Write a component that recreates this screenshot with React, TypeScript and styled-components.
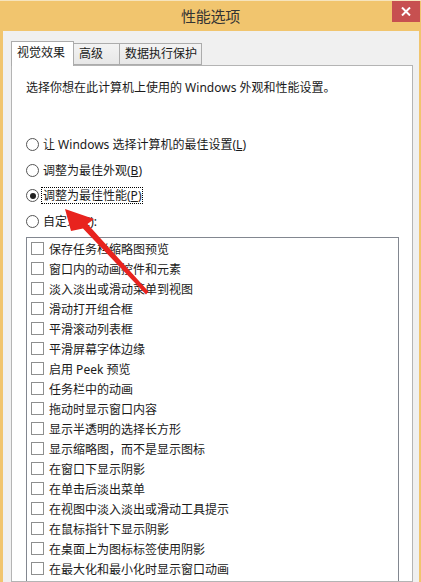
import React from "react";
import styled, { createGlobalStyle } from "styled-components";

const Global = createGlobalStyle`
  html, body { margin: 0; padding: 0; background: #ffffff; }
  #root { width: 421px; height: 582px; overflow: hidden; }
  * { box-sizing: border-box; }
`;

const Window = styled.div`
  position: relative;
  width: 421px;
  height: 582px;
  display: flex;
  flex-direction: column;
  background: #f1c56e;
  border-top: 1px solid #f6e4bd;
  overflow: hidden;
  font-family: "Noto Sans", "Noto Sans CJK SC", sans-serif;
  font-size: 12px;
  color: #1a1a1a;
`;

const TitleBar = styled.div`
  height: 30px;
  flex: none;
  display: grid;
  grid-template-columns: 1fr auto 1fr;
  align-items: start;
`;

const Title = styled.div`
  grid-column: 2;
  font-size: 15px;
  line-height: 30px;
  color: #333333;
  letter-spacing: -0.3px;
`;

const CloseButton = styled.div`
  grid-column: 3;
  justify-self: end;
  width: 28px;
  height: 21px;
  margin-right: 1px;
  background: #c75050;
  display: flex;
  align-items: center;
  justify-content: center;
`;

const Client = styled.div`
  flex: 1;
  min-height: 0;
  margin: 0 2px 0 3px;
  background: #f0f0f0;
  padding: 10px 6px 0 8px;
  display: flex;
  flex-direction: column;
`;

const TabStrip = styled.div`
  display: flex;
  align-items: flex-end;
  height: 24px;
  flex: none;
  position: relative;
  z-index: 1;
`;

const Tab = styled.div<{ $active?: boolean; $minWidth?: number }>`
  height: ${(p) => (p.$active ? 25 : 22)}px;
  margin-bottom: ${(p) => (p.$active ? -1 : 0)}px;
  min-width: ${(p) => p.$minWidth ?? 0}px;
  padding: 0 ${(p) => (p.$active ? "8px 0 5px" : "4px 0 5px")};
  border: 1px solid #acacac;
  border-bottom: ${(p) => (p.$active ? "none" : "1px solid #acacac")};
  margin-left: ${(p) => (p.$active ? 0 : -1)}px;
  background: ${(p) =>
    p.$active ? "#ffffff" : "linear-gradient(#f3f3f3, #e7e7e7)"};
  line-height: ${(p) => (p.$active ? 22 : 20)}px;
  white-space: nowrap;
  &:first-child { margin-left: 0; }
`;

const Panel = styled.div`
  flex: 1;
  background: #ffffff;
  border: 1px solid #b4b4b4;
  padding: 14px 13px 0 14px;
  display: flex;
  flex-direction: column;
`;

const Description = styled.div`
  line-height: 16px;
  white-space: nowrap;
`;

const RadioGroup = styled.div`
  margin-top: 40px;
  display: flex;
  flex-direction: column;
  gap: 8.5px;
`;

const RadioRow = styled.div`
  height: 17px;
  display: flex;
  align-items: center;
`;

const RadioCircle = styled.span<{ $checked?: boolean }>`
  width: 13px;
  height: 13px;
  border-radius: 50%;
  border: 1px solid #555555;
  background: #ffffff;
  flex: none;
  display: flex;
  align-items: center;
  justify-content: center;
  &::after {
    content: "";
    display: ${(p) => (p.$checked ? "block" : "none")};
    width: 6px;
    height: 6px;
    border-radius: 50%;
    background: #222222;
  }
`;

const RadioLabel = styled.span<{ $focused?: boolean }>`
  margin-left: 2px;
  height: 17px;
  padding: 0 1px;
  line-height: 15px;
  border: 1px dotted ${(p) => (p.$focused ? "#000000" : "transparent")};
  white-space: nowrap;
`;

const List = styled.div`
  margin-top: 7px;
  border: 1px solid #828790;
  border-bottom: none;
  flex: 1;
  padding: 1px 0 0 4px;
  display: flex;
  flex-direction: column;
`;

const ListRow = styled.div`
  height: 20px;
  flex: none;
  display: flex;
  align-items: center;
  white-space: nowrap;
`;

const CheckBox = styled.span`
  width: 13px;
  height: 13px;
  border: 1px solid #8e8f8f;
  background: #ffffff;
  flex: none;
  margin-right: 5px;
`;

const ArrowLayer = styled.svg`
  position: absolute;
  left: 0;
  top: 0;
  pointer-events: none;
`;

const items = [
  "保存任务栏缩略图预览",
  "窗口内的动画控件和元素",
  "淡入淡出或滑动菜单到视图",
  "滑动打开组合框",
  "平滑滚动列表框",
  "平滑屏幕字体边缘",
  "启用 Peek 预览",
  "任务栏中的动画",
  "拖动时显示窗口内容",
  "显示半透明的选择长方形",
  "显示缩略图，而不是显示图标",
  "在窗口下显示阴影",
  "在单击后淡出菜单",
  "在视图中淡入淡出或滑动工具提示",
  "在鼠标指针下显示阴影",
  "在桌面上为图标标签使用阴影",
  "在最大化和最小化时显示窗口动画",
];

export default function App() {
  return (
    <>
      <Global />
      <Window>
        <TitleBar>
          <Title>性能选项</Title>
          <CloseButton>
            <svg width="10" height="9" viewBox="0 0 10 9">
              <path d="M1 0.5 L9 8.5 M9 0.5 L1 8.5" stroke="#ffffff" strokeWidth="2" />
            </svg>
          </CloseButton>
        </TitleBar>
        <Client>
          <TabStrip>
            <Tab $active>视觉效果</Tab>
            <Tab $minWidth={47}>高级</Tab>
            <Tab>数据执行保护</Tab>
          </TabStrip>
          <Panel>
            <Description>选择你想在此计算机上使用的 Windows 外观和性能设置。</Description>
            <RadioGroup>
              <RadioRow>
                <RadioCircle />
                <RadioLabel>
                  让 Windows 选择计算机的最佳设置(<u>L</u>)
                </RadioLabel>
              </RadioRow>
              <RadioRow>
                <RadioCircle />
                <RadioLabel>
                  调整为最佳外观(<u>B</u>)
                </RadioLabel>
              </RadioRow>
              <RadioRow>
                <RadioCircle $checked />
                <RadioLabel $focused>
                  调整为最佳性能(<u>P</u>)
                </RadioLabel>
              </RadioRow>
              <RadioRow>
                <RadioCircle />
                <RadioLabel>
                  自定义(<u>C</u>):
                </RadioLabel>
              </RadioRow>
            </RadioGroup>
            <List>
              {items.map((t) => (
                <ListRow key={t}>
                  <CheckBox />
                  {t}
                </ListRow>
              ))}
            </List>
          </Panel>
        </Client>
        <ArrowLayer width="421" height="582" viewBox="0 0 421 582">
          <polygon
            points="65,208 94,218 87.5,223 148.5,290.5 146,293.5 83,227.5 71,230"
            fill="#e8231e"
          />
        </ArrowLayer>
      </Window>
    </>
  );
}
